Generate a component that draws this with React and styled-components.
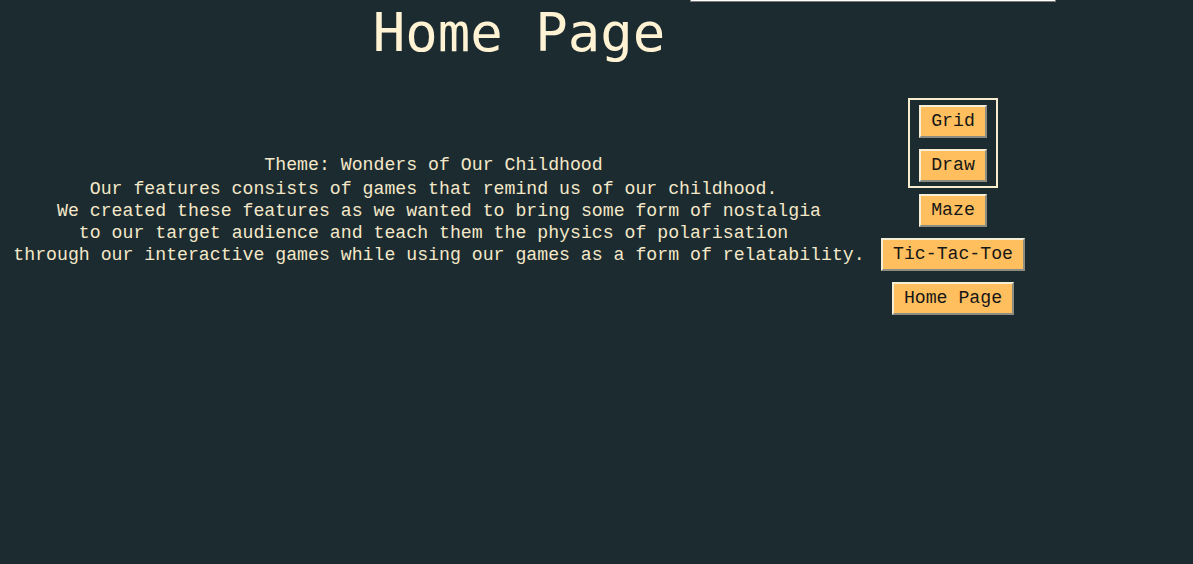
import React from "react";
import styled, { createGlobalStyle } from "styled-components";

const GlobalStyle = createGlobalStyle`
  html, body {
    margin: 0;
    padding: 0;
    background: #1c2b30;
  }
  body {
    min-height: 564px;
    overflow: hidden;
    font-family: "Liberation Mono", monospace;
  }
`;

const Page = styled.div`
  position: relative;
  width: 1193px;
  min-height: 564px;
  background: #1c2b30;
`;

// only the bottom edge of this box shows at the top of the viewport
const Canvas = styled.div`
  position: absolute;
  left: 690px;
  top: -150px;
  width: 364px;
  height: 150px;
  background: #ffffff;
  border: 1px solid #7a7a7a;
`;

const Header = styled.header`
  width: 1038px;
  text-align: center;
`;

const Title = styled.h1`
  margin: 0;
  padding-top: 1px;
  font-family: "DejaVu Sans Mono", monospace;
  font-weight: normal;
  font-size: 54px;
  line-height: 64px;
  color: #fff3d4;
`;

const Main = styled.main`
  display: grid;
  grid-template-columns: 878px 150px;
  align-items: center;
  margin-top: 33px;
`;

const About = styled.section`
  padding-top: 7px;
  text-align: center;
  font-family: "Liberation Mono", monospace;
  font-size: 18.2px;
  line-height: 22px;
  color: #f4e8c9;
`;

const Line = styled.div`
  white-space: pre;
  margin-bottom: ${(p) => (p.$head ? "2px" : "0")};
`;

const Nav = styled.nav`
  display: flex;
  flex-direction: column;
  align-items: center;
  gap: 11px;
`;

const Group = styled.div`
  display: flex;
  flex-direction: column;
  align-items: center;
  gap: 11px;
  padding: 5px 9px 4px;
  margin-bottom: -5px;
  border: 2px solid #f7ecce;
`;

const Button = styled.button`
  padding: 4px 10px;
  font-family: "Liberation Mono", monospace;
  font-size: 18.2px;
  line-height: 21px;
  color: #161616;
  background: #ffbf5e;
  border: 2px solid;
  border-color: #f6efd6 #8d8c82 #8d8c82 #f6efd6;
  cursor: pointer;
`;

const lines = [
  "Our features consists of games that remind us of our childhood. ",
  "We created these features as we wanted to bring some form of nostalgia",
  "to our target audience and teach them the physics of polarisation ",
  "through our interactive games while using our games as a form of relatability.",
];

export default function App() {
  return (
    <Page>
      <GlobalStyle />
      <Canvas />
      <Header>
        <Title>Home Page</Title>
      </Header>
      <Main>
        <About>
          <Line $head>Theme: Wonders of Our Childhood </Line>
          {lines.map((l) => (
            <Line key={l}>{l}</Line>
          ))}
        </About>
        <Nav>
          <Group>
            <Button>Grid</Button>
            <Button>Draw</Button>
          </Group>
          <Button>Maze</Button>
          <Button>Tic-Tac-Toe</Button>
          <Button>Home Page</Button>
        </Nav>
      </Main>
    </Page>
  );
}
